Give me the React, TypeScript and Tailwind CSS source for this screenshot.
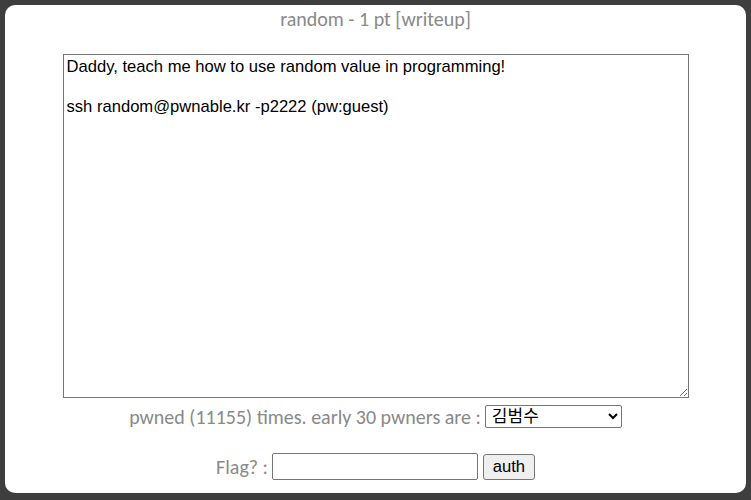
import React from "react";

export default function App() {
  return (
    <div className="w-[751px] h-[500px] bg-[#3e3e3e] pt-[5px] px-[5px] overflow-hidden">
      <div className="h-[488px] bg-white rounded-[10px] flex flex-col items-center">
        <div className="mt-[2px] h-[24px] leading-[24px] text-[20px] text-[#898989] font-[Carlito,Lato,sans-serif]">
          random - 1 pt [writeup]
        </div>
        <textarea
          className="mt-[23px] w-[626px] h-[344px] border border-[#767676] pl-[3px] pr-[2px] py-[2px] text-[16.6px] leading-[20px] text-black outline-none font-['Liberation_Sans',Arial,sans-serif]"
          defaultValue={"Daddy, teach me how to use random value in programming!\n\nssh random@pwnable.kr -p2222 (pw:guest)"}
        />
        <div className="mt-[7px] h-[23px] flex items-center">
          <span className="text-[20px] text-[#898989] mr-[4px] font-[Carlito,Lato,sans-serif]">
            pwned (11155) times. early 30 pwners are :
          </span>
          <select
            className="w-[137px] h-[23px] border border-[#767676] rounded-[2px] text-[17px] text-black bg-white pl-[2px] font-['Liberation_Sans','Noto_Sans_CJK_KR',sans-serif]"
            defaultValue="a"
          >
            <option value="a">김범수</option>
          </select>
        </div>
        <div className="mt-[25px] h-[27px] flex items-center">
          <span className="text-[20px] text-[#898989] mr-[4px] font-[Carlito,Lato,sans-serif]">
            Flag? :
          </span>
          <input
            type="text"
            className="w-[206px] h-[27px] border border-[#767676] rounded-[2px] bg-white outline-none"
          />
          <button className="ml-[5px] w-[52px] h-[26px] border border-[#767676] rounded-[3px] bg-[#efefef] text-[16.6px] text-black font-['Liberation_Sans',Arial,sans-serif]">
            auth
          </button>
        </div>
      </div>
    </div>
  );
}
